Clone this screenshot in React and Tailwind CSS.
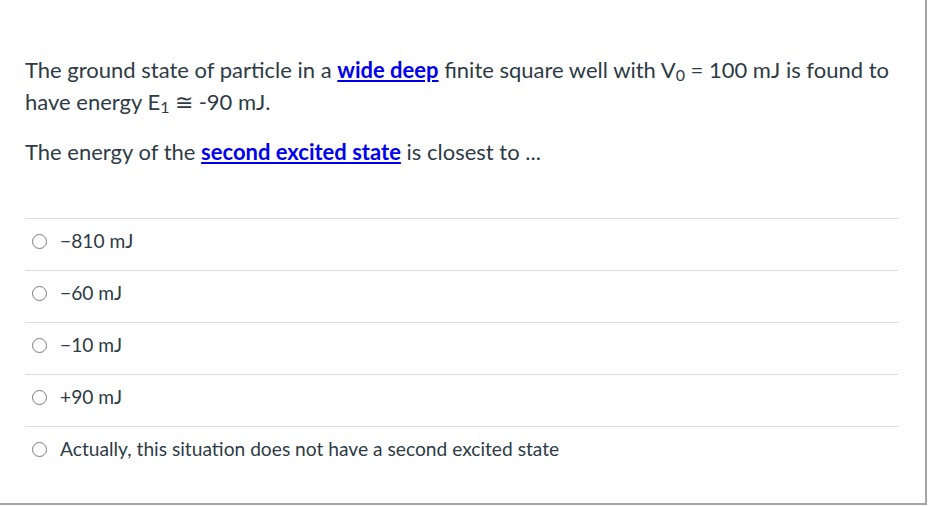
export default function App() {
  const answers = ['\u2212810 mJ', '\u221260 mJ', '\u221210 mJ', '+90 mJ', 'Actually, this situation does not have a second excited state'];

  return (
    <div className="w-[930px] h-[506px] bg-white" style={{ fontFamily: 'Lato, "Open Sans", sans-serif' }}>
      <div className="w-[927px] h-[505px] border-r-2 border-b-2 border-[#a5a5a5] text-[#2d3b45]">
        {/* Question text */}
        <div className="pt-[54px] pl-[25px] pr-[30px] text-[22px] leading-[32px]">
          <p>
            The ground state of particle in a{' '}
            <a href="#" className="text-[#0000ee] font-bold underline">wide deep</a>{' '}
            finite square well with V
            <sub className="text-[16px] leading-none relative top-[3px] align-baseline">0</sub>
            {' '}= 100 mJ is found to have energy E
            <sub className="text-[16px] leading-none relative top-[3px] align-baseline">1</sub>
            {' '}≅ -90 mJ.
          </p>
          <p className="mt-[18px]">
            The energy of the{' '}
            <a href="#" className="text-[#0000ee] font-bold underline">second excited state</a>{' '}
            is closest to ...
          </p>
        </div>

        {/* Answers */}
        <div className="mt-[50px] ml-[25px] w-[873px]">
          {answers.map((a) => (
            <div key={a} className="border-t border-[#dcdcdc] h-[52px] flex items-start pt-[11px]">
              <span className="ml-[7px] w-[15px] h-[15px] rounded-full border border-[#7a7a7a] mt-[4px] shrink-0"></span>
              <span className="ml-[13px] text-[19.2px] leading-[22px]">{a}</span>
            </div>
          ))}
        </div>
      </div>
    </div>
  );
}
